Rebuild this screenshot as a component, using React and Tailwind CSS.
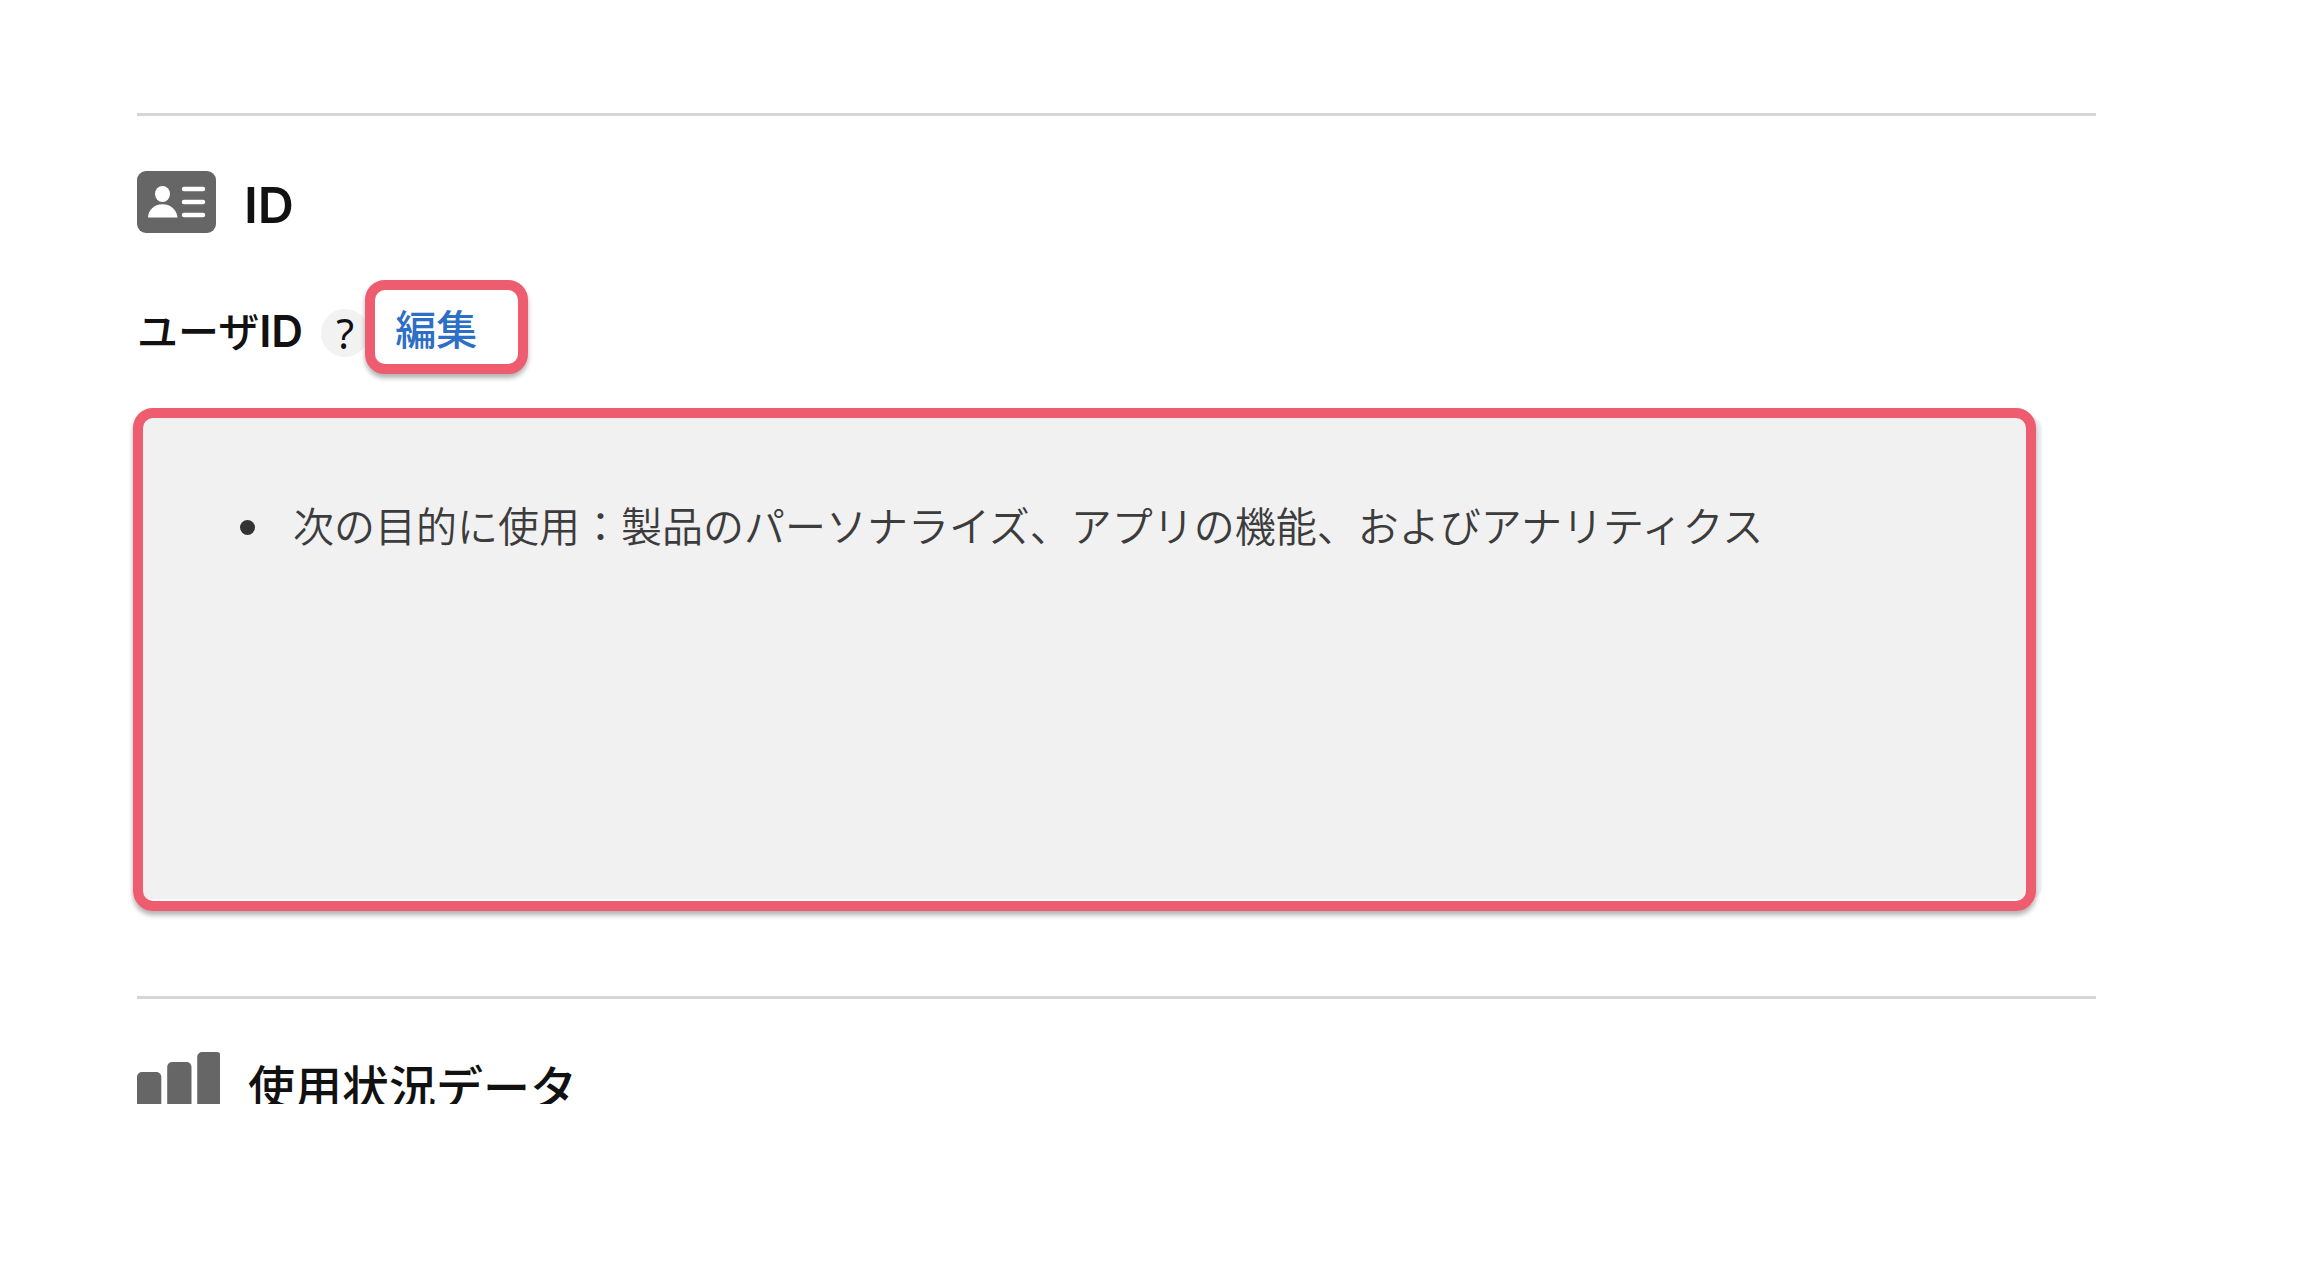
const purposes = ["次の目的に使用：製品のパーソナライズ、アプリの機能、およびアナリティクス"];

export default function App() {
  return (
    <main className="bg-white pt-[113px] pr-[207px] pl-[137px] font-['Inter','Noto_Sans_CJK_JP',sans-serif] text-[#111111]">
      {/* ===================== Identifiers ===================== */}
      <section className="border-t-3 border-[#d6d6d6] pb-[97px]">
        <header className="flex h-[117px] items-end gap-7">
          <IdCardIcon />
          <h2 className="text-[50px] leading-[56px] font-semibold">ID</h2>
        </header>

        <div className="mt-[47px] flex h-[94px] items-center">
          <h3 className="flex items-baseline pt-2 text-[41px] leading-[60px] font-medium">
            ユーザ<span className="text-[44px] font-semibold">ID</span>
          </h3>
          <button
            type="button"
            aria-label="ユーザIDについて"
            className="mt-3 ml-[18px] h-12 w-12 shrink-0 rounded-full bg-[#f2f2f2] font-['Noto_Sans',sans-serif] text-[41px] leading-[48px]"
          >
            ?
          </button>
          <a
            href="#edit"
            className="relative -ml-1 flex h-[94px] w-[163px] items-center rounded-[20px] border-10 border-[#ee5c6f] bg-white pt-2 pl-5 text-[41px] font-medium text-[#2d6fc6] shadow-[0_4px_5px_rgba(0,0,0,0.3)]"
          >
            編集
          </a>
        </div>

        <div className="relative mt-[43px] mr-[54px] h-[482px] rounded-[12px] bg-[#f1f1f1] pt-20 pl-[103px]">
          <ul>
            {purposes.map((purpose) => (
              <li key={purpose} className="flex items-center gap-[38px] text-[41px] leading-[60px] font-[350] text-[#3c3c3c]">
                <span className="h-[15px] w-[15px] shrink-0 rounded-full bg-[#333333]" />
                {purpose}
              </li>
            ))}
          </ul>
          {/* highlight frame over the panel */}
          <div className="pointer-events-none absolute -top-[9px] right-[6px] -bottom-3 -left-1 rounded-[20px] border-10 border-[#ee5c6f] shadow-[0_4px_5px_rgba(0,0,0,0.3)]" />
        </div>
      </section>

      {/* ===================== Usage data ===================== */}
      <section className="border-t-3 border-[#d6d6d6]">
        <header className="flex h-[105px] items-start gap-7 overflow-hidden pt-[53px]">
          <BarsIcon />
          <h2 className="pt-0.5 text-[47px] leading-[68px] font-medium">使用状況データ</h2>
        </header>
      </section>
    </main>
  );
}

/* ----------------------- Icons ----------------------- */
function IdCardIcon() {
  return (
    <svg width="79" height="62" viewBox="0 0 79 62" className="shrink-0" aria-hidden="true">
      <rect width="79" height="62" rx="9" fill="#666666" />
      <ellipse cx="25.5" cy="23" rx="7.5" ry="8" fill="#ffffff" />
      <path d="M11 46.5C11 39.5 17 33.2 25.5 33.2S40 39.5 40.5 46.5Z" fill="#ffffff" />
      <path d="M47 18H66M47 31H66M47 44H66" stroke="#ffffff" strokeWidth="4.4" strokeLinecap="round" />
    </svg>
  );
}

function BarsIcon() {
  return (
    <svg width="83" height="62" viewBox="0 0 83 62" className="shrink-0" fill="#666666" aria-hidden="true">
      <rect x="0" y="20" width="24.3" height="60" rx="5" />
      <rect x="30.2" y="10" width="24.3" height="70" rx="5" />
      <rect x="60.2" y="0" width="24.3" height="80" rx="5" />
    </svg>
  );
}
